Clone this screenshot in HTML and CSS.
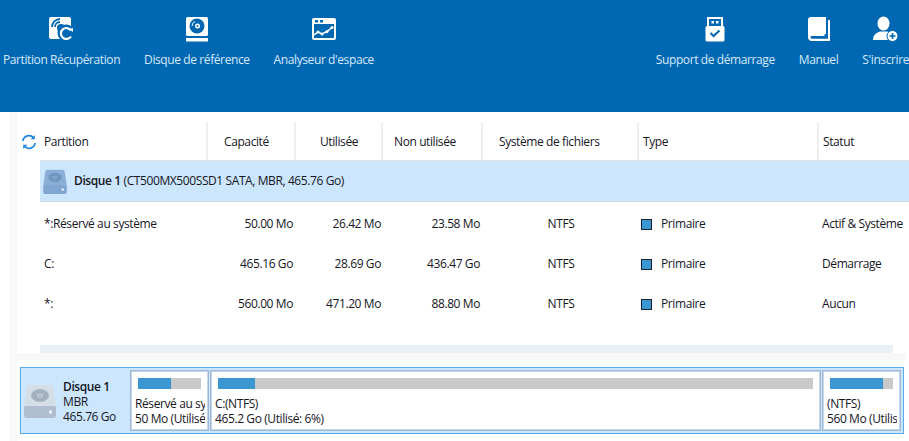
FILE: index.html
```html
<!DOCTYPE html>
<html lang="fr">
<head>
<meta charset="utf-8">
<title>Partition</title>
<link rel="stylesheet" href="styles.css">
</head>
<body>
<svg class="defs" width="0" height="0" aria-hidden="true">
  <symbol id="hdd" viewBox="0 0 32 34">
    <path class="hdd-top" d="M6 1h20c2 0 3 1 3.300 3L32 24H0L2.700 4C3 2 4 1 6 1z"/>
    <path class="hdd-base" d="M0 24c0-1 .5-2 2-2h28c1.500 0 2 1 2 2v7c0 2-1 3-3 3H3c-2 0-3-1-3-3z"/>
    <ellipse class="hdd-disc" cx="16" cy="11.500" rx="9" ry="6.500"/>
    <ellipse class="hdd-hub" cx="16" cy="11.500" rx="3" ry="2"/>
    <ellipse class="hdd-disc" cx="16" cy="11.500" rx="1.400" ry="1"/>
    <rect class="hdd-led" x="25" y="26.500" width="3" height="3"/>
  </symbol>
</svg>

<header class="toolbar">
  <div class="tool-group">
    <div class="tool">
      <svg class="tool-icon" viewBox="0 0 26 26"><rect x="0" y="1" width="22" height="22" rx="2" fill="#fff"/><path d="M3 11a8 8 0 0 1 8-8M6 11a5 5 0 0 1 5-5" fill="none" stroke="#0067b3" stroke-width="1.800"/><circle cx="12" cy="12" r="4" fill="#0067b3"/><circle cx="17" cy="17" r="8.500" fill="#0067b3"/><path d="M22 14.500a5.500 5.500 0 1 0 0 6" fill="none" stroke="#fff" stroke-width="2.200"/><path d="M20 13l4-1v4z" fill="#fff"/></svg>
      <span>Partition Récupération</span>
    </div>
    <div class="tool">
      <svg class="tool-icon" viewBox="0 0 24 26"><rect x="1" y="1" width="22" height="19" rx="1.500" fill="#fff"/><rect x="1" y="22" width="22" height="3.500" fill="#fff"/><circle cx="12" cy="10" r="7.500" fill="#0067b3"/><circle cx="12.500" cy="10" r="2.500" fill="#fff"/><circle cx="12.500" cy="10" r="1" fill="#0067b3"/><path d="M7 10a5 5 0 0 1 3-4.500" fill="none" stroke="#fff" stroke-width="1"/></svg>
      <span>Disque de référence</span>
    </div>
    <div class="tool">
      <svg class="tool-icon" viewBox="0 0 26 26"><rect x="1" y="2" width="24" height="22" rx="2" fill="#fff"/><rect x="3" y="8" width="20" height="14" fill="#0067b3"/><rect x="4" y="4" width="3" height="2.500" fill="#0067b3"/><rect x="9" y="4" width="3" height="2.500" fill="#0067b3"/><path d="M3 19l4-3 4 2 5-2.500 5-4" fill="none" stroke="#fff" stroke-width="1.500"/><circle cx="7" cy="16" r="1.500" fill="#fff"/><circle cx="11" cy="18" r="1.500" fill="#fff"/><circle cx="16" cy="15.500" r="1.500" fill="#fff"/><circle cx="21" cy="11.500" r="1.500" fill="#fff"/></svg>
      <span>Analyseur d'espace</span>
    </div>
  </div>
  <div class="tool-group">
    <div class="tool">
      <svg class="tool-icon" viewBox="0 0 20 26"><path d="M3 10V2h14v8" fill="none" stroke="#fff" stroke-width="2"/><rect x="6.500" y="5" width="2.500" height="2.500" fill="#fff"/><rect x="11" y="5" width="2.500" height="2.500" fill="#fff"/><rect x="0.500" y="10" width="19" height="15.500" rx="1.500" fill="#fff"/><path d="M5.500 17l3 3 6-5.500" fill="none" stroke="#0067b3" stroke-width="2"/></svg>
      <span>Support de démarrage</span>
    </div>
    <div class="tool">
      <svg class="tool-icon" viewBox="0 0 24 26"><path d="M4 1h15v17H5c-2 0-3.500 1-4 2.500V4c0-2 1-3 3-3z" fill="#fff"/><path d="M21 4h2v21H5c-2.500 0-4-1.500-4-4s1.500-3.500 4-3.500h12.500V20H5c-1 0-1.500.5-1.500 1.300S4 22.700 5 22.700h16z" fill="#fff"/></svg>
      <span>Manuel</span>
    </div>
    <div class="tool">
      <svg class="tool-icon" viewBox="0 0 26 26"><ellipse cx="10.500" cy="7.500" rx="6" ry="7" fill="#fff"/><path d="M0 24c0-5 3-7 7-8.500h7c3 1 5 2 6.500 4L14 24z" fill="#fff"/><circle cx="19.500" cy="20" r="5.500" fill="#fff" stroke="#0067b3" stroke-width="1"/><path d="M16.500 20h6M19.500 17v6" stroke="#0067b3" stroke-width="1.600"/></svg>
      <span>S'inscrire</span>
    </div>
  </div>
</header>

<div class="workspace">
  <div class="gutter"></div>
  <div class="strip"></div>
  <main class="content">
    <section class="table">
      <svg class="refresh" viewBox="0 0 16 16"><path d="M2 7a6 6 0 0 1 10.500-3.300M14 9a6 6 0 0 1-10.500 3.300" fill="none" stroke="#1d86e0" stroke-width="1.700"/><path d="M13.800 1v4.200H9.600zM2.200 15v-4.200h4.200z" fill="#1d86e0"/></svg>
      <div class="grid head">
        <div class="h h-name">Partition</div>
        <div class="h h-cap">Capacité</div>
        <div class="h h-used">Utilisée</div>
        <div class="h h-free">Non utilisée</div>
        <div class="h h-fs">Système de fichiers</div>
        <div class="h h-type">Type</div>
        <div class="h h-stat">Statut</div>
      </div>
      <div class="disk-row">
        <svg class="disk-row-icon"><use href="#hdd"/></svg>
        <span><b>Disque 1</b> (CT500MX500SSD1 SATA, MBR, 465.76 Go)</span>
      </div>
      <div class="grid row">
        <div class="c-name">*:Réservé au système</div><div class="c-num c1">50.00 Mo</div><div class="c-num c2">26.42 Mo</div><div class="c-num c3">23.58 Mo</div><div class="c-fs">NTFS</div><div class="c-type"><i class="sq"></i>Primaire</div><div class="c-stat">Actif &amp; Système</div>
      </div>
      <div class="grid row">
        <div class="c-name">C:</div><div class="c-num c1">465.16 Go</div><div class="c-num c2">28.69 Go</div><div class="c-num c3">436.47 Go</div><div class="c-fs">NTFS</div><div class="c-type"><i class="sq"></i>Primaire</div><div class="c-stat">Démarrage</div>
      </div>
      <div class="grid row">
        <div class="c-name">*:</div><div class="c-num c1">560.00 Mo</div><div class="c-num c2">471.20 Mo</div><div class="c-num c3">88.80 Mo</div><div class="c-fs">NTFS</div><div class="c-type"><i class="sq"></i>Primaire</div><div class="c-stat">Aucun</div>
      </div>
    </section>
    <div class="scroll-blue"></div>
    <div class="scroll-gray"></div>
    <section class="map">
      <div class="map-info">
        <svg class="map-icon"><use href="#hdd"/></svg>
        <div class="map-text"><b>Disque 1</b><br>MBR<br>465.76 Go</div>
      </div>
      <div class="part p1">
        <div class="bar"><div class="used u1"></div></div>
        <div class="label">Réservé au système<br>50 Mo (Utilisé: 52%)</div>
      </div>
      <div class="part p2">
        <div class="bar"><div class="used u2"></div></div>
        <div class="label">C:(NTFS)<br>465.2 Go (Utilisé: 6%)</div>
      </div>
      <div class="part p3">
        <div class="bar"><div class="used u3"></div></div>
        <div class="label">(NTFS)<br>560 Mo (Utilisé: 84%)</div>
      </div>
    </section>
  </main>
</div>
</body>
</html>
```
FILE: styles.css
```css
* { box-sizing: border-box; }
html, body { margin: 0; padding: 0; }
body {
  width: 909px;
  height: 441px;
  overflow: hidden;
  display: flex;
  flex-direction: column;
  background: #fff;
  color: #16161f;
  font: 12px/16px "Open Sans", "Noto Sans", sans-serif;
  letter-spacing: -0.4px;
}
.defs { position: absolute; }
b { font-weight: 600; }

.toolbar {
  flex: 0 0 112px;
  background: #0067b3;
  display: flex;
  justify-content: space-between;
  padding-left: 3px;
  color: #d6e9f8;
  overflow: hidden;
}
.tool-group { display: flex; gap: 24px; }
.tool {
  display: flex;
  flex-direction: column;
  align-items: center;
  padding-top: 16px;
  white-space: nowrap;
}
.tool-icon { width: 26px; height: 26px; margin-bottom: 10px; }

.workspace { flex: 1; display: flex; min-height: 0; }
.gutter { flex: 0 0 9px; }
.strip { flex: 0 0 8px; background: #f9f9f9; }
.content { flex: 1; display: flex; flex-direction: column; min-width: 0; }

.table { position: relative; flex: 0 0 233px; padding-top: 10px; }
.refresh { position: absolute; left: 4px; top: 22px; width: 16px; height: 16px; }
.grid {
  display: grid;
  grid-template-columns: 168px 88px 87px 100px 156px 180px 90px;
  margin-left: 23px;
}
.head { height: 39px; border-bottom: 1px solid #e3e3e3; }
.h { display: flex; align-items: center; padding-top: 1px; border-right: 2px solid #efefef; white-space: nowrap; }
.h-name { padding-left: 4px; }
.h-cap { padding-left: 16px; }
.h-used { padding-left: 24px; }
.h-free { padding-left: 11px; }
.h-fs { padding-left: 16px; }
.h-type { padding-left: 4px; }
.h-stat { padding-left: 4px; border-right: 0; }

.disk-row {
  margin-left: 23px;
  height: 41px;
  background: #cce6fd;
  border-bottom: 1px solid #cfd8e0;
  display: flex;
  align-items: center;
  gap: 7px;
  padding-left: 3px;
  white-space: nowrap;
}
.disk-row-icon { width: 24px; height: 25px; --top: #8aaed6; --base: #7ea6d0; --disc: #6f97c2; --hub: #8aaed6; }

.row { height: 40px; align-items: center; white-space: nowrap; }
.disk-row + .row { margin-top: 2px; }
.c-name { padding-left: 4px; }
.c-num { text-align: right; }
.c1 { padding-right: 3px; }
.c2 { padding-right: 2px; }
.c3 { padding-right: 3px; }
.c-fs { text-align: center; }
.c-type { display: flex; align-items: center; padding-left: 2px; }
.c-stat { padding-left: 3px; }
.sq {
  width: 11px;
  height: 11px;
  margin-right: 9px;
  background: #3c96d2;
  border: 1px solid #16202c;
}

.scroll-blue { height: 8px; margin: 0 16px 0 23px; background: #e8f0f8; }
.scroll-gray { height: 7px; margin-right: 3px; background: #f8f8f8; }

.hdd-top { fill: var(--top, #d5dde6); }
.hdd-base { fill: var(--base, #aebdd0); }
.hdd-disc { fill: var(--disc, #a3b0c0); }
.hdd-hub { fill: var(--hub, #c4cfdb); }
.hdd-led { fill: #eef4fa; }

.map {
  margin: 7px 5px 0 3px;
  height: 67px;
  background: #cce6fd;
  border: 1px solid #5aa9ea;
  display: flex;
  gap: 1px;
  padding: 2px 3px 2px 0;
}
.map-info { flex: 0 0 108px; display: flex; gap: 7px; padding: 14px 0 0 3px; }
.map-icon { width: 32px; height: 34px; flex: none; }
.map-text { margin-top: -5px; line-height: 15px; white-space: nowrap; }
.part {
  background: #fff;
  border: 1px solid #9fb7d6;
  outline: 1px solid #c7d7ea;
  outline-offset: -2px;
  padding: 7px 3px 0 4px;
  overflow: hidden;
  min-width: 0;
}
.p1 { flex: 0 0 79px; }
.p2 { flex: 0 0 611px; }
.p3 { flex: 0 0 79px; }
.bar { height: 11px; margin: 0 4px 7px 3px; background: #c9c9c9; }
.used { height: 100%; background: #3c96d2; }
.u1 { width: 52%; }
.u2 { width: 6.2%; }
.u3 { width: 84%; }
.label { white-space: nowrap; overflow: hidden; line-height: 15px; }
```
